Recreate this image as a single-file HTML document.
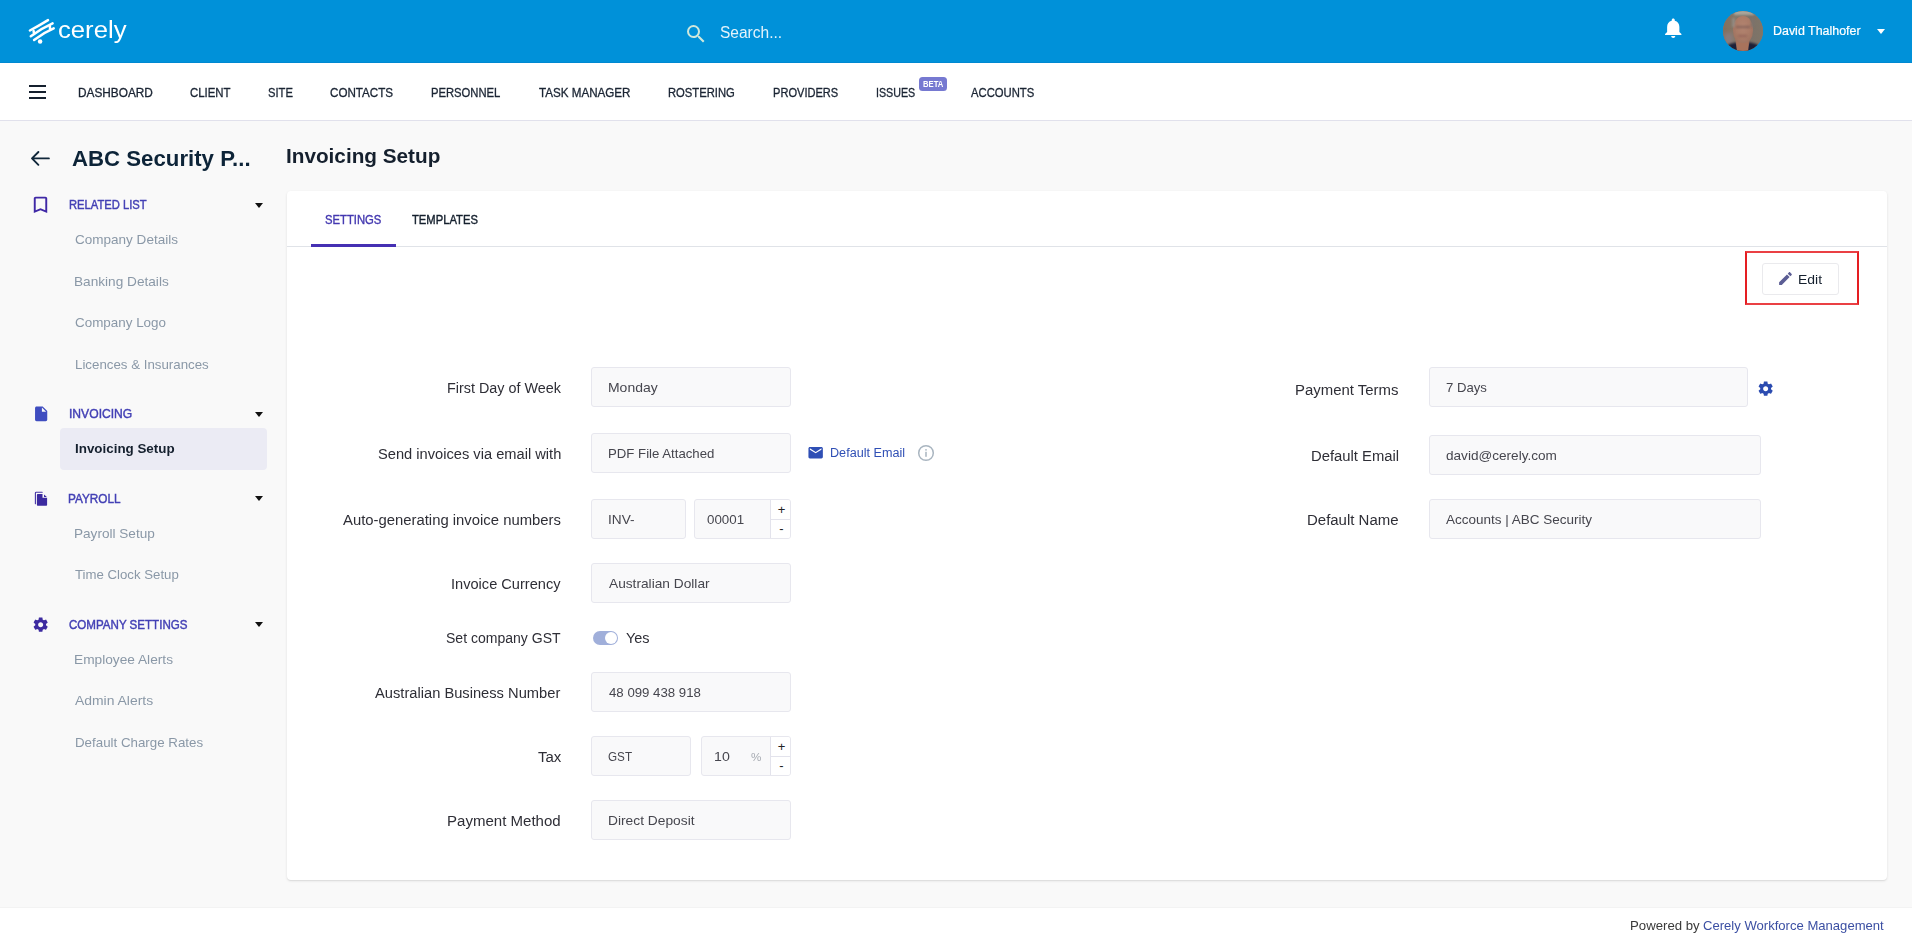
<!DOCTYPE html>
<html lang="en">
<head>
<meta charset="utf-8">
<title>Invoicing Setup</title>
<style>
*{box-sizing:border-box;margin:0;padding:0}
html,body{width:1912px;height:937px;overflow:hidden}
body{font-family:"Liberation Sans",sans-serif;background:#f9f9f9;color:#333;position:relative;font-size:13px}
.abs{position:absolute}
.t{position:absolute;white-space:nowrap;transform-origin:0 0}
#hdr{position:absolute;left:0;top:0;width:1912px;height:63px;background:#0091d9;border-bottom:1px solid #0088d1}
#nav{position:absolute;left:0;top:63px;width:1912px;height:58px;background:#fff;border-bottom:1px solid #e1e1ec}
.car{position:absolute;left:255px;width:0;height:0;border-left:4px solid transparent;border-right:4px solid transparent;border-top:5px solid #111}
#card{position:absolute;left:287px;top:191px;width:1600px;height:689px;background:#fff;border-radius:4px;box-shadow:0 1px 1px rgba(0,0,0,.06),0 1px 3px rgba(0,0,0,.09)}
.inp{position:absolute;height:40px;background:#f9f9fa;border:1px solid #e7e7ee;border-radius:3px}
.spin{position:absolute;right:0;top:0;width:20px;height:38px;background:#fff;border-left:1px solid #e3e3ec;border-radius:0 2px 2px 0}
.spin:before{content:"";position:absolute;left:0;top:19px;width:19px;height:1px;background:#e3e3ec}
.pm{position:absolute;font-size:13px;line-height:14px;color:#222;width:20px;text-align:center}
</style>
</head>
<body>
<div id="hdr"></div>
<!-- logo -->
<svg class="abs" style="left:26px;top:16px" width="32" height="32" viewBox="26 16 32 32" fill="none" stroke="#fff" stroke-width="2.5" stroke-linecap="round">
<path d="M29.9 30.5 Q38.95 25.7 48 20.100"/>
<path d="M30.800 36.200 Q41 28.600 52.600 23.400"/>
<path d="M34.100 40 Q43.500 32.700 53.700 28.400"/>
<path d="M33.600 31 L34 33.400"/>
<path d="M49.800 26 L50.200 29.600"/>
<circle cx="40.1" cy="41.600" r="2.25" fill="#fff" stroke="none"/>
</svg>
<!-- search icon -->
<svg class="abs" style="left:683.5px;top:21.5px" width="24" height="24" viewBox="0 0 24 24"><path fill="#cfe8dc" d="M15.5 14h-.79l-.28-.27A6.471 6.471 0 0 0 16 9.500 6.500 6.500 0 1 0 9.500 16c1.610 0 3.090-.59 4.230-1.570l.27.28v.79l5 4.990L20.490 19l-4.990-5zm-6 0C7.010 14 5 11.990 5 9.500S7.010 5 9.500 5 14 7.010 14 9.500 11.990 14 9.500 14z"/></svg>
<!-- bell -->
<svg class="abs" style="left:1660.500px;top:15.600px" width="24.5" height="23.900" viewBox="0 0 24 24" preserveAspectRatio="none"><path fill="#fff" d="M12 22c1.100 0 2-.9 2-2h-4c0 1.100.89 2 2 2zm6-6v-5c0-3.070-1.640-5.640-4.500-6.320V4c0-.83-.67-1.500-1.500-1.500s-1.500.67-1.500 1.500v.68C7.630 5.360 6 7.920 6 11v5l-2 2v1h16v-1l-2-2z"/></svg>
<!-- avatar -->
<div class="abs" style="left:1723px;top:11px;width:40px;height:40px;border-radius:50%;overflow:hidden;background:#877b6e">
 <div class="abs" style="left:0;top:0;width:40px;height:40px;background:linear-gradient(90deg,#846f5c 0,#84786a 35%,#7b7269 70%,#807567 100%)"></div>
 <div class="abs" style="left:11px;top:-1px;width:20px;height:5px;background:#a9a69c;filter:blur(1.2px)"></div>
 <div class="abs" style="left:1px;top:22px;width:9px;height:12px;background:#8d8088;filter:blur(2px);opacity:.7"></div>
 <div class="abs" style="left:3px;top:31px;width:34px;height:14px;border-radius:45% 45% 0 0;background:#1d2038;filter:blur(.8px)"></div>
 <div class="abs" style="left:12px;top:27px;width:15px;height:15px;background:#a9735c;filter:blur(1px);clip-path:polygon(0 0,100% 0,85% 100%,15% 100%)"></div>
 <div class="abs" style="left:9.500px;top:4.500px;width:20px;height:27.500px;border-radius:48% 48% 44% 44%;background:radial-gradient(ellipse at 50% 40%,#b28470 0,#aa7b67 50%,#966c5b 100%);filter:blur(.7px)"></div>
 <div class="abs" style="left:8.500px;top:7px;width:3px;height:9px;background:#97908a;filter:blur(1px);opacity:.8"></div>
 <div class="abs" style="left:27.500px;top:7px;width:3px;height:9px;background:#7d746e;filter:blur(1px);opacity:.8"></div>
 <div class="abs" style="left:12.500px;top:14.800px;width:14px;height:2.200px;background:#7a5a55;filter:blur(.9px);opacity:.75"></div>
 <div class="abs" style="left:15px;top:24px;width:9px;height:1.600px;background:#8e5f56;filter:blur(.8px);opacity:.7"></div>
</div>
<div class="abs" style="left:1877px;top:29px;width:0;height:0;border-left:4.200px solid transparent;border-right:4.200px solid transparent;border-top:5px solid #fff"></div>
<!-- nav -->
<div id="nav"></div>
<div class="abs" style="left:29px;top:85px;width:17px;height:2px;background:#15202e;box-shadow:0 6px 0 #15202e,0 12px 0 #15202e"></div>
<div class="abs" style="left:919px;top:77px;width:28px;height:14px;border-radius:3.500px;background:#7679d1"></div>
<!-- sidebar -->
<svg class="abs" style="left:30px;top:149px" width="21" height="19" viewBox="30 149 21 19" fill="none" stroke="#10273a" stroke-width="1.900" stroke-linecap="round" stroke-linejoin="round"><path d="M48.900 158.400H32.200M38.400 152l-6.400 6.400 6.400 6.400"/></svg>
<svg class="abs" style="left:29px;top:193.600px" width="23" height="21.600" viewBox="0 0 24 24" preserveAspectRatio="none"><path fill="#3f28a6" d="M17 3H7c-1.100 0-2 .9-2 2v16l7-3 7 3V5c0-1.100-.9-2-2-2zm0 15l-5-2.180L7 18V5h10v13z"/></svg>
<div class="car" style="top:203px"></div>
<svg class="abs" style="left:32px;top:405.100px" width="18.300" height="17.800" viewBox="0 0 24 24" preserveAspectRatio="none"><path fill="#3f4dc0" d="M6 2c-1.100 0-1.990.9-1.990 2L4 20c0 1.100.89 2 1.990 2H18c1.100 0 2-.9 2-2V8l-6-6H6zm7 7V3.500L18.500 9H13z"/></svg>
<div class="car" style="top:412px"></div>
<div class="abs" style="left:60px;top:428px;width:207px;height:41.500px;border-radius:4px;background:#ebebf4"></div>
<svg class="abs" style="left:33px;top:490px" width="16" height="18" viewBox="33 490 16 18"><path fill="none" stroke="#4634a6" stroke-width="1.100" stroke-linejoin="round" stroke-linecap="round" d="M42.200 492.300H36.200q-.8 0-.8.800V503.700"/><path fill="#3c2ba0" d="M37.700 494.100h4.800v3.700h4.600v7.200q0 .8-.8.800h-8.600q-.8 0-.8-.8v-10.100q0-.8.800-.8zM44 494.500l2.900 2.500H44z"/></svg>
<div class="car" style="top:496px"></div>
<svg class="abs" style="left:32.350px;top:615.850px" width="17.300" height="17.300" viewBox="0 0 24 24"><path fill="#3d2ba0" d="M19.430 12.980c.04-.32.07-.64.07-.98s-.03-.66-.07-.98l2.110-1.650c.19-.15.24-.42.12-.64l-2-3.460c-.12-.22-.39-.3-.61-.22l-2.490 1c-.52-.4-1.080-.73-1.690-.98l-.38-2.650C14.460 2.180 14.250 2 14 2h-4c-.25 0-.46.18-.49.42l-.38 2.650c-.61.25-1.170.59-1.690.98l-2.490-1c-.23-.09-.49 0-.61.22l-2 3.460c-.13.220-.07.490.12.640l2.110 1.650c-.04.320-.07.650-.07.980s.03.660.07.980l-2.110 1.650c-.19.150-.24.420-.12.640l2 3.460c.12.220.39.300.61.220l2.490-1c.52.400 1.080.730 1.690.980l.38 2.650c.03.240.24.420.49.420h4c.25 0 .46-.18.490-.42l.38-2.650c.61-.25 1.170-.59 1.690-.98l2.490 1c.23.090.49 0 .61-.22l2-3.460c.12-.22.07-.49-.12-.64l-2.110-1.650zM12 15.500c-1.930 0-3.500-1.570-3.500-3.500s1.570-3.500 3.500-3.500 3.500 1.570 3.500 3.500-1.570 3.500-3.500 3.500z"/></svg>
<div class="car" style="top:622px"></div>
<!-- card -->
<div id="card"></div>
<div class="abs" style="left:287px;top:246px;width:1600px;height:1px;background:#e0e3e8"></div>
<div class="abs" style="left:311px;top:244px;width:85px;height:3px;background:#4530b3"></div>
<div class="abs" style="left:1745px;top:251px;width:114px;height:54px;border:2px solid;border-color:#ea4044 #e51e22"></div>
<div class="abs" style="left:1762px;top:263px;width:77px;height:32px;border:1px solid #eaeaed;border-radius:3px;background:#fff"></div>
<svg class="abs" style="left:1776.900px;top:270.400px" width="17" height="17" viewBox="0 0 24 24"><path fill="#5b5d94" d="M3 17.250V21h3.750L17.810 9.940l-3.750-3.750L3 17.250zM20.710 7.040c.39-.39.39-1.020 0-1.410l-2.340-2.340c-.39-.39-1.020-.39-1.410 0l-1.830 1.830 3.750 3.750 1.830-1.830z"/></svg>
<!-- left form -->
<div class="inp" style="left:591px;top:367px;width:200px"></div>
<div class="inp" style="left:591px;top:433px;width:200px"></div>
<svg class="abs" style="left:806.600px;top:444.400px" width="17.300" height="17.300" viewBox="0 0 24 24"><path fill="#2f4fb5" d="M20 4H4c-1.100 0-1.990.9-1.990 2L2 18c0 1.100.9 2 2 2h16c1.100 0 2-.9 2-2V6c0-1.100-.9-2-2-2zm0 4l-8 5-8-5V6l8 5 8-5v2z"/></svg>
<svg class="abs" style="left:916.800px;top:444.100px" width="18" height="18" viewBox="0 0 18 18" fill="none"><circle cx="9" cy="9" r="7.300" stroke="#a9b5c0" stroke-width="1.500"/><rect x="8.250" y="7.800" width="1.500" height="5" fill="#a9b5c0"/><rect x="8.250" y="5.100" width="1.500" height="1.500" fill="#a9b5c0"/></svg>
<div class="inp" style="left:591px;top:499px;width:95px"></div>
<div class="inp" style="left:694px;top:499px;width:97px"><div class="spin"></div></div>
<div class="pm" style="left:771.5px;top:503px">+</div><div class="pm" style="left:771.5px;top:522px">-</div>
<div class="inp" style="left:591px;top:563px;width:200px"></div>
<div class="abs" style="left:592.500px;top:631px;width:25.600px;height:14px;border-radius:7px;background:#a0afda"></div>
<div class="abs" style="left:605px;top:631.800px;width:12.400px;height:12.400px;border-radius:50%;background:#fff"></div>
<div class="inp" style="left:591px;top:672px;width:200px"></div>
<div class="inp" style="left:591px;top:736px;width:100px"></div>
<div class="inp" style="left:701px;top:736px;width:90px"><div class="spin"></div></div>
<div class="pm" style="left:771.5px;top:740px">+</div><div class="pm" style="left:771.5px;top:759px">-</div>
<div class="inp" style="left:591px;top:800px;width:200px"></div>
<!-- right form -->
<div class="inp" style="left:1429px;top:367px;width:319px"></div>
<svg class="abs" style="left:1757.200px;top:380.300px" width="17.300" height="17.300" viewBox="0 0 24 24"><path fill="#2b4bb0" d="M19.430 12.980c.04-.32.07-.64.07-.98s-.03-.66-.07-.98l2.110-1.650c.19-.15.24-.42.12-.64l-2-3.460c-.12-.22-.39-.3-.61-.22l-2.490 1c-.52-.4-1.080-.73-1.690-.98l-.38-2.650C14.460 2.180 14.250 2 14 2h-4c-.25 0-.46.18-.49.42l-.38 2.650c-.61.25-1.170.59-1.690.98l-2.490-1c-.23-.09-.49 0-.61.22l-2 3.460c-.13.220-.07.490.12.640l2.110 1.650c-.04.320-.07.650-.07.980s.03.660.07.980l-2.110 1.650c-.19.150-.24.420-.12.640l2 3.460c.12.220.39.300.61.220l2.490-1c.52.400 1.080.730 1.690.980l.38 2.650c.03.240.24.420.49.420h4c.25 0 .46-.18.490-.42l.38-2.650c.61-.25 1.170-.59 1.690-.98l2.490 1c.23.090.49 0 .61-.22l2-3.460c.12-.22.07-.49-.12-.64l-2.110-1.650zM12 15.500c-1.930 0-3.500-1.570-3.500-3.500s1.570-3.500 3.500-3.500 3.500 1.570 3.500 3.500-1.570 3.500-3.500 3.500z"/></svg>
<div class="inp" style="left:1429px;top:435px;width:332px"></div>
<div class="inp" style="left:1429px;top:499px;width:332px"></div>
<!-- footer -->
<div class="abs" style="left:0;top:907px;width:1912px;height:30px;background:#fff;border-top:1px solid #f3f3f3"></div>
<div class="t" style="left:78.10px;top:86px;font-size:12px;line-height:14px;color:#1a2433;transform:scaleX(0.9852);-webkit-text-stroke:0.3px #1a2433">DASHBOARD</div>
<div class="t" style="left:189.64px;top:86px;font-size:12px;line-height:14px;color:#1a2433;transform:scaleX(0.9506);-webkit-text-stroke:0.3px #1a2433">CLIENT</div>
<div class="t" style="left:268.16px;top:86px;font-size:12px;line-height:14px;color:#1a2433;transform:scaleX(0.9315);-webkit-text-stroke:0.3px #1a2433">SITE</div>
<div class="t" style="left:330.34px;top:86px;font-size:12px;line-height:14px;color:#1a2433;transform:scaleX(0.9684);-webkit-text-stroke:0.3px #1a2433">CONTACTS</div>
<div class="t" style="left:431.14px;top:86px;font-size:12px;line-height:14px;color:#1a2433;transform:scaleX(0.9365);-webkit-text-stroke:0.3px #1a2433">PERSONNEL</div>
<div class="t" style="left:539.30px;top:86px;font-size:12px;line-height:14px;color:#1a2433;transform:scaleX(0.9683);-webkit-text-stroke:0.3px #1a2433">TASK MANAGER</div>
<div class="t" style="left:667.61px;top:86px;font-size:12px;line-height:14px;color:#1a2433;transform:scaleX(0.9369);-webkit-text-stroke:0.3px #1a2433">ROSTERING</div>
<div class="t" style="left:772.83px;top:86px;font-size:12px;line-height:14px;color:#1a2433;transform:scaleX(0.9227);-webkit-text-stroke:0.3px #1a2433">PROVIDERS</div>
<div class="t" style="left:876.23px;top:86px;font-size:12px;line-height:14px;color:#1a2433;transform:scaleX(0.8897);-webkit-text-stroke:0.3px #1a2433">ISSUES</div>
<div class="t" style="left:970.77px;top:86px;font-size:12px;line-height:14px;color:#1a2433;transform:scaleX(0.9396);-webkit-text-stroke:0.3px #1a2433">ACCOUNTS</div>
<div class="t" style="left:57.94px;top:16px;font-size:24.6px;line-height:27px;color:#fff;transform:scaleX(1.0435)">cerely</div>
<div class="t" style="left:719.94px;top:24px;font-size:16px;line-height:17px;color:#e4f3fb;transform:scaleX(0.9695)">Search...</div>
<div class="t" style="left:1773.14px;top:24px;font-size:12.5px;line-height:14px;color:#fff;transform:scaleX(0.9950);-webkit-text-stroke:0.2px #fff">David Thalhofer</div>
<div class="t" style="left:71.88px;top:146px;font-size:22px;line-height:25px;color:#0d2438;transform:scaleX(1.0098);font-weight:bold">ABC Security P...</div>
<div class="t" style="left:69.03px;top:198px;font-size:12px;line-height:14px;color:#4340b5;transform:scaleX(0.9332);-webkit-text-stroke:0.42px #4340b5">RELATED LIST</div>
<div class="t" style="left:69.23px;top:407px;font-size:12px;line-height:14px;color:#4340b5;transform:scaleX(1.0100);-webkit-text-stroke:0.42px #4340b5">INVOICING</div>
<div class="t" style="left:68.02px;top:492px;font-size:12px;line-height:14px;color:#4340b5;transform:scaleX(0.9813);-webkit-text-stroke:0.42px #4340b5">PAYROLL</div>
<div class="t" style="left:69.14px;top:618px;font-size:12px;line-height:14px;color:#4340b5;transform:scaleX(0.9638);-webkit-text-stroke:0.42px #4340b5">COMPANY SETTINGS</div>
<div class="t" style="left:74.90px;top:232px;font-size:13px;line-height:15px;color:#8a98a7;transform:scaleX(1.0401)">Company Details</div>
<div class="t" style="left:73.94px;top:274px;font-size:13px;line-height:15px;color:#8a98a7;transform:scaleX(1.0487)">Banking Details</div>
<div class="t" style="left:74.90px;top:315px;font-size:13px;line-height:15px;color:#8a98a7;transform:scaleX(1.0320)">Company Logo</div>
<div class="t" style="left:74.58px;top:357px;font-size:13px;line-height:15px;color:#8a98a7;transform:scaleX(1.0227)">Licences &amp; Insurances</div>
<div class="t" style="left:73.94px;top:526px;font-size:13px;line-height:15px;color:#8a98a7;transform:scaleX(1.0448)">Payroll Setup</div>
<div class="t" style="left:74.92px;top:567px;font-size:13px;line-height:15px;color:#8a98a7;transform:scaleX(1.0162)">Time Clock Setup</div>
<div class="t" style="left:74.10px;top:652px;font-size:13px;line-height:15px;color:#8a98a7;transform:scaleX(1.0539)">Employee Alerts</div>
<div class="t" style="left:75.03px;top:693px;font-size:13px;line-height:15px;color:#8a98a7;transform:scaleX(1.0706)">Admin Alerts</div>
<div class="t" style="left:74.95px;top:735px;font-size:13px;line-height:15px;color:#8a98a7;transform:scaleX(1.0247)">Default Charge Rates</div>
<div class="t" style="left:74.76px;top:441px;font-size:13px;line-height:15px;color:#15202e;transform:scaleX(1.0293);font-weight:bold">Invoicing Setup</div>
<div class="t" style="left:286.16px;top:145px;font-size:20.3px;line-height:22px;color:#15202e;transform:scaleX(1.0220);font-weight:bold">Invoicing Setup</div>
<div class="t" style="left:325.22px;top:212px;font-size:13px;line-height:15px;color:#4338b0;transform:scaleX(0.8659);-webkit-text-stroke:0.4px #4338b0">SETTINGS</div>
<div class="t" style="left:411.95px;top:212px;font-size:13px;line-height:15px;color:#15202e;transform:scaleX(0.8636);-webkit-text-stroke:0.4px #15202e">TEMPLATES</div>
<div class="t" style="left:1798.48px;top:272px;font-size:13px;line-height:15px;color:#15202e;transform:scaleX(1.0725)">Edit</div>
<div class="t" style="left:446.74px;top:380px;font-size:14px;line-height:16px;color:#2e2e36;transform:scaleX(1.0268)">First Day of Week</div>
<div class="t" style="left:377.92px;top:446px;font-size:14px;line-height:16px;color:#2e2e36;transform:scaleX(1.0472)">Send invoices via email with</div>
<div class="t" style="left:343.07px;top:512px;font-size:14px;line-height:16px;color:#2e2e36;transform:scaleX(1.0608)">Auto-generating invoice numbers</div>
<div class="t" style="left:450.79px;top:576px;font-size:14px;line-height:16px;color:#2e2e36;transform:scaleX(1.0429)">Invoice Currency</div>
<div class="t" style="left:446.18px;top:630px;font-size:14px;line-height:16px;color:#2e2e36;transform:scaleX(1.0016)">Set company GST</div>
<div class="t" style="left:374.82px;top:685px;font-size:14px;line-height:16px;color:#2e2e36;transform:scaleX(1.0489)">Australian Business Number</div>
<div class="t" style="left:537.96px;top:749px;font-size:14px;line-height:16px;color:#2e2e36;transform:scaleX(1.0709)">Tax</div>
<div class="t" style="left:447.11px;top:813px;font-size:14px;line-height:16px;color:#2e2e36;transform:scaleX(1.0740)">Payment Method</div>
<div class="t" style="left:625.61px;top:630px;font-size:14px;line-height:16px;color:#2e2e36;transform:scaleX(1.0325)">Yes</div>
<div class="t" style="left:1294.77px;top:382px;font-size:14px;line-height:16px;color:#2e2e36;transform:scaleX(1.0663)">Payment Terms</div>
<div class="t" style="left:1310.68px;top:448px;font-size:14px;line-height:16px;color:#2e2e36;transform:scaleX(1.0584)">Default Email</div>
<div class="t" style="left:1307.05px;top:512px;font-size:14px;line-height:16px;color:#2e2e36;transform:scaleX(1.0691)">Default Name</div>
<div class="t" style="left:608.02px;top:380px;font-size:13px;line-height:15px;color:#46464e;transform:scaleX(1.0730)">Monday</div>
<div class="t" style="left:608.16px;top:446px;font-size:13px;line-height:15px;color:#46464e;transform:scaleX(1.0154)">PDF File Attached</div>
<div class="t" style="left:607.95px;top:512px;font-size:13px;line-height:15px;color:#46464e;transform:scaleX(1.0520)">INV-</div>
<div class="t" style="left:707.22px;top:512px;font-size:13px;line-height:15px;color:#46464e;transform:scaleX(1.0264)">00001</div>
<div class="t" style="left:608.66px;top:576px;font-size:13px;line-height:15px;color:#46464e;transform:scaleX(1.0546)">Australian Dollar</div>
<div class="t" style="left:608.64px;top:685px;font-size:13px;line-height:15px;color:#46464e;transform:scaleX(1.0172)">48 099 438 918</div>
<div class="t" style="left:608.38px;top:749px;font-size:13px;line-height:15px;color:#46464e;transform:scaleX(0.8996)">GST</div>
<div class="t" style="left:714.00px;top:749px;font-size:13px;line-height:15px;color:#46464e;transform:scaleX(1.0903)">10</div>
<div class="t" style="left:608.03px;top:813px;font-size:13px;line-height:15px;color:#46464e;transform:scaleX(1.0598)">Direct Deposit</div>
<div class="t" style="left:1445.94px;top:380px;font-size:13px;line-height:15px;color:#46464e;transform:scaleX(1.0115)">7 Days</div>
<div class="t" style="left:1446.16px;top:448px;font-size:13px;line-height:15px;color:#46464e;transform:scaleX(1.0447)">david@cerely.com</div>
<div class="t" style="left:1445.85px;top:512px;font-size:13px;line-height:15px;color:#46464e;transform:scaleX(1.0371)">Accounts | ABC Security</div>
<div class="t" style="left:751.21px;top:751px;font-size:11.5px;line-height:12px;color:#a8acb3;transform:scaleX(1.0148)">%</div>
<div class="t" style="left:830.27px;top:446px;font-size:12px;line-height:14px;color:#2f4fb5;transform:scaleX(1.0522)">Default Email</div>
<div class="t" style="left:1629.59px;top:918px;font-size:13px;line-height:15px;color:#3a3a3a;transform:scaleX(1.0146)">Powered by</div>
<div class="t" style="left:1702.75px;top:918px;font-size:13px;line-height:15px;color:#3b4fa3;transform:scaleX(1.0059)">Cerely Workforce Management</div>
<div class="t" style="left:923.40px;top:79px;font-size:8.6px;line-height:10px;color:#fff;transform:scaleX(0.8927);font-weight:bold">BETA</div>
</body>
</html>
